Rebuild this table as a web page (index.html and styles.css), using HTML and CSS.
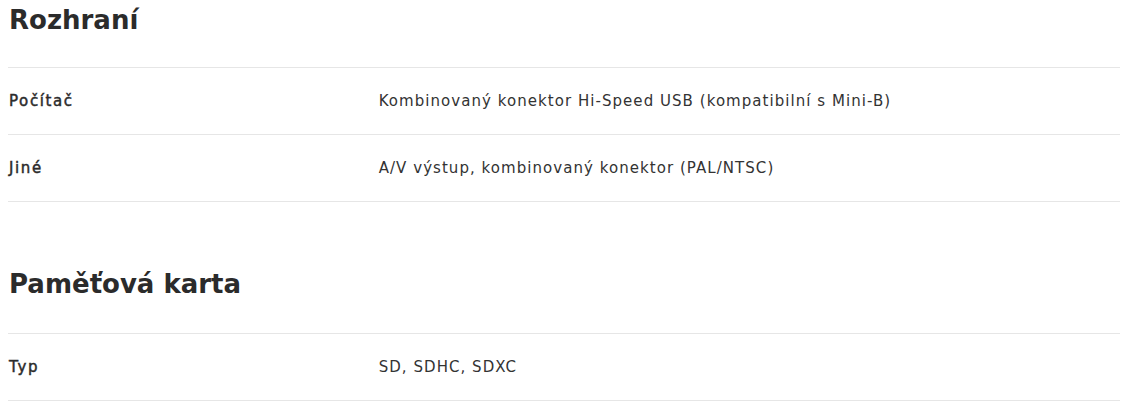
FILE: index.html
```html
<!DOCTYPE html>
<html lang="cs">
<head>
<meta charset="utf-8">
<link rel="stylesheet" href="styles.css">
</head>
<body>
<section class="spec">
  <h2 class="spec-title">Rozhraní</h2>
  <div class="spec-row"><div class="spec-label">Počítač</div><div class="spec-value">Kombinovaný konektor Hi-Speed USB (kompatibilní s Mini-B)</div></div>
  <div class="spec-row"><div class="spec-label">Jiné</div><div class="spec-value">A/V výstup, kombinovaný konektor (PAL/NTSC)</div></div>
</section>
<section class="spec">
  <h2 class="spec-title">Paměťová karta</h2>
  <div class="spec-row"><div class="spec-label">Typ</div><div class="spec-value">SD, SDHC, SDXC</div></div>
</section>
</body>
</html>
```
FILE: styles.css
```css
html, body { margin: 0; padding: 0; background: #fff; }
body {
  padding: 0 17px 0 8px;
  font-family: "DejaVu Sans", "Open Sans", sans-serif;
  color: #333;
}
.spec-title {
  margin: 3px 0 30px 1px;
  font-size: 26px;
  line-height: 34px;
  font-weight: 700;
  color: #2b2b2b;
}
.spec + .spec .spec-title { margin-top: 65px; margin-bottom: 32px; }
.spec-row {
  display: grid;
  grid-template-columns: 1fr 2fr;
  border-top: 1px solid #e6e6e6;
  padding: 22px 0;
  font-size: 15px;
  line-height: 22px;
}
.spec-row:last-child { border-bottom: 1px solid #e6e6e6; }
.spec-label {
  font-weight: 400;
  padding-left: 1px;
  letter-spacing: 1.6px;
  color: #2b2b2b;
  -webkit-text-stroke: 0.45px #2b2b2b;
}
.spec-value { font-weight: 400; letter-spacing: 1.05px; }
```
